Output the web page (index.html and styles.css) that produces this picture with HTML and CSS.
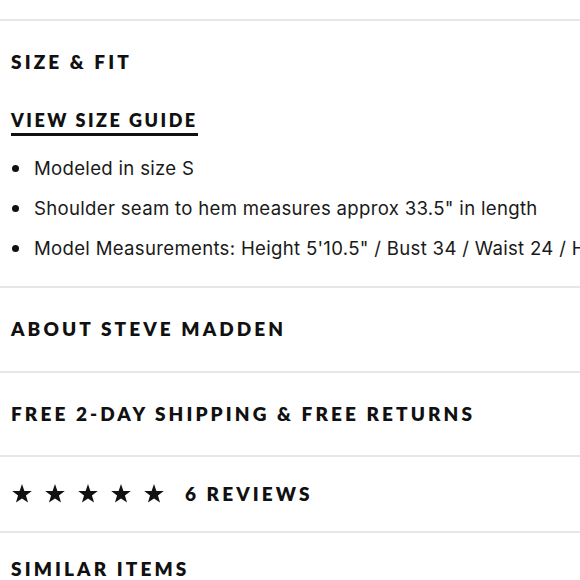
FILE: index.html
```html
<!DOCTYPE html>
<html>
<head>
<meta charset="utf-8">
<link rel="stylesheet" href="styles.css">
</head>
<body>
<div class="page">
  <div class="top-spacer"></div>
  <section class="section size-fit">
    <h2 class="heading">SIZE &amp; FIT</h2>
    <a class="guide-link">VIEW SIZE GUIDE</a>
    <ul class="bullets">
      <li>Modeled in size S</li>
      <li>Shoulder seam to hem measures approx 33.5" in length</li>
      <li>Model Measurements: Height 5'10.5" / Bust 34 / Waist 24 / Hips 34</li>
    </ul>
  </section>
  <section class="section row">
    <h2 class="heading">ABOUT STEVE MADDEN</h2>
  </section>
  <section class="section row">
    <h2 class="heading">FREE 2-DAY SHIPPING &amp; FREE RETURNS</h2>
  </section>
  <section class="section reviews">
    <div class="stars">
      <svg class="star" viewBox="0 0 24 24"><polygon points="12,1 14.6,8.6 22.7,8.8 16.3,13.7 18.6,21.4 12,16.8 5.4,21.4 7.7,13.7 1.3,8.8 9.4,8.6"/></svg>
      <svg class="star" viewBox="0 0 24 24"><polygon points="12,1 14.6,8.6 22.7,8.8 16.3,13.7 18.6,21.4 12,16.8 5.4,21.4 7.7,13.7 1.3,8.8 9.4,8.6"/></svg>
      <svg class="star" viewBox="0 0 24 24"><polygon points="12,1 14.6,8.6 22.7,8.8 16.3,13.7 18.6,21.4 12,16.8 5.4,21.4 7.7,13.7 1.3,8.8 9.4,8.6"/></svg>
      <svg class="star" viewBox="0 0 24 24"><polygon points="12,1 14.6,8.6 22.7,8.8 16.3,13.7 18.6,21.4 12,16.8 5.4,21.4 7.7,13.7 1.3,8.8 9.4,8.6"/></svg>
      <svg class="star" viewBox="0 0 24 24"><polygon points="12,1 14.6,8.6 22.7,8.8 16.3,13.7 18.6,21.4 12,16.8 5.4,21.4 7.7,13.7 1.3,8.8 9.4,8.6"/></svg>
    </div>
    <span class="heading review-count">6 REVIEWS</span>
  </section>
  <section class="section similar">
    <h2 class="heading">SIMILAR ITEMS</h2>
  </section>
</div>
</body>
</html>
```
FILE: styles.css
```css
html, body {
  margin: 0;
  padding: 0;
  background: #ffffff;
}
.page {
  width: 580px;
  height: 580px;
  overflow: hidden;
  color: #111111;
}
.top-spacer {
  height: 19px;
}
.section {
  border-top: 2px solid #e6e6e6;
  padding-left: 11px;
}
.heading {
  margin: 0;
  font-family: Lato, "Liberation Sans", sans-serif;
  font-weight: 800;
  font-size: 19px;
  line-height: 20px;
  letter-spacing: 3.1px;
  white-space: nowrap;
}
.size-fit {
  padding-top: 31px;
  padding-bottom: 18px;
}
.guide-link {
  display: inline-block;
  margin-top: 38px;
  font-family: Lato, "Liberation Sans", sans-serif;
  font-weight: 800;
  font-size: 18px;
  line-height: 20px;
  letter-spacing: 2.5px;
  padding-bottom: 3px;
  border-bottom: 3px solid #111111;
}
.bullets {
  list-style: none;
  margin: 12px 0 0 0;
  padding: 0;
}
.bullets li {
  position: relative;
  padding-left: 23px;
  font-family: Inter, "Liberation Sans", sans-serif;
  font-size: 18.6px;
  letter-spacing: 0.3px;
  line-height: 40px;
  white-space: nowrap;
  overflow: hidden;
  color: #1a1a1a;
}
.bullets li::before {
  content: "";
  position: absolute;
  left: 1px;
  top: 17px;
  width: 7px;
  height: 7px;
  border-radius: 50%;
  background: #111111;
}
.row {
  padding-top: 31px;
  padding-bottom: 31.5px;
}
.reviews {
  display: flex;
  align-items: center;
  height: 74px;
}
.stars {
  display: flex;
  gap: 11px;
}
.star {
  width: 22px;
  height: 22px;
  fill: #111111;
  display: block;
}
.review-count {
  margin-left: 20px;
}
.similar {
  padding-top: 26px;
}
```
